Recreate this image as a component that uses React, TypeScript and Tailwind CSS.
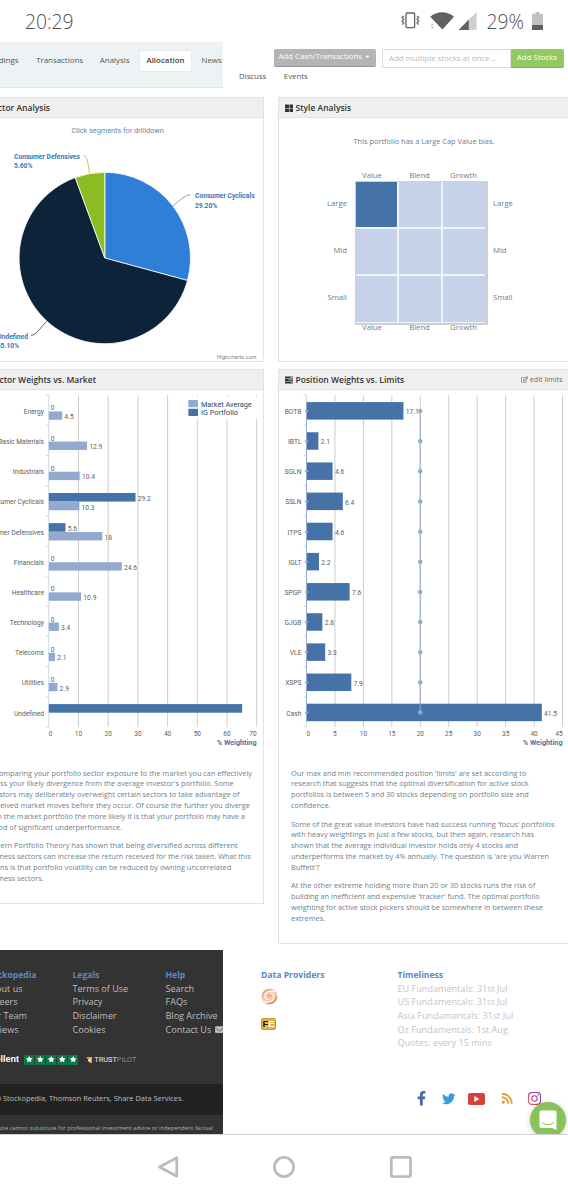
import React from "react";
import {
  FaCaretDown,
  FaEnvelope,
  FaFacebookF,
  FaInstagram,
  FaRegEdit,
  FaRss,
  FaStar,
  FaThLarge,
  FaTwitter,
} from "react-icons/fa";

const CHART_TOP = 395.2;
const BAND = 30.16;

const sectors: { name: string; portfolio: number; market: number | null }[] = [
  { name: "Energy", portfolio: 0, market: 4.5 },
  { name: "Basic Materials", portfolio: 0, market: 12.9 },
  { name: "Industrials", portfolio: 0, market: 10.4 },
  { name: "Consumer Cyclicals", portfolio: 29.2, market: 10.3 },
  { name: "Consumer Defensives", portfolio: 5.6, market: 18 },
  { name: "Financials", portfolio: 0, market: 24.6 },
  { name: "Healthcare", portfolio: 0, market: 10.9 },
  { name: "Technology", portfolio: 0, market: 3.4 },
  { name: "Telecoms", portfolio: 0, market: 2.1 },
  { name: "Utilities", portfolio: 0, market: 2.9 },
  { name: "Undefined", portfolio: 65.1, market: null },
];

const positions: [string, number][] = [
  ["BOTB", 17.1],
  ["IBTL", 2.1],
  ["SGLN", 4.6],
  ["SSLN", 6.4],
  ["ITPS", 4.6],
  ["IGLT", 2.2],
  ["SPGP", 7.6],
  ["GJGB", 2.8],
  ["VLE", 3.3],
  ["XSPS", 7.9],
  ["Cash", 41.5],
];

function StatusBar() {
  return (
    <div className="flex h-[42px] shrink-0 items-center justify-between pl-[25px] pr-[25.5px] font-['Open_Sans',sans-serif] text-[19.3px] font-light text-[#505050]">
      <span className="mt-[2px]">20:29</span>
      <div className="flex items-center">
        <svg className="h-[17px] w-[19px]" viewBox="0 0 19 17" fill="none" stroke="#616161">
          <rect x="5" y="1" width="8.6" height="14.6" rx="1" strokeWidth="1.3" />
          <path d="M2.8 4 1 5.6l1.8 1.7L1 9l1.8 1.7L1.4 12.6M16 4l1.8 1.6L16 7.3 17.8 9 16 10.7l1.4 1.9" strokeWidth="1.2" />
        </svg>
        <svg className="ml-[9.5px] h-[19px] w-[26px]" viewBox="0 0 26 19">
          <path d="M1.2 5.8C7.6-.3 18.7-.3 25 5.8L13.4 18.4Z" fill="#616161" />
          <path d="M1.5 14.2l1.8-2 1.8 2zM1.5 15.8l1.8 2 1.8-2z" fill="#c4c4c4" />
        </svg>
        <svg className="ml-[2.5px] h-[18px] w-[19px]" viewBox="0 0 19 18">
          <path d="M18.6 0v18H.6z" fill="#cfcfcf" />
          <path d="M10.8 7.6V18H.6z" fill="#616161" />
        </svg>
        <span className="ml-[10px] mt-[2px] text-[19.2px]">29%</span>
        <svg className="ml-[7.5px] h-[18px] w-[11px]" viewBox="0 0 11 18">
          <path d="M3.5 0h4v1.8H11V17q0 1-1 1H1q-1 0-1-1V1.8h3.5z" fill="#c1c1c1" />
          <path d="M0 13h11v4q0 1-1 1H1q-1 0-1-1z" fill="#616161" />
        </svg>
      </div>
    </div>
  );
}

function TopNav() {
  return (
    <div className="flex h-[55px] shrink-0 whitespace-nowrap text-[7.9px] text-[#555]">
      <nav className="flex h-[45.5px] w-[223px] items-start overflow-hidden border-b border-[#dfe3e4] bg-[#edf3f4] pt-[7.5px]">
        <span className="flex h-[22.5px] w-[18.5px] shrink-0 items-center justify-end">Holdings</span>
        <span className="flex h-[22.5px] w-[64.5px] shrink-0 items-center justify-end">Transactions</span>
        <span className="flex h-[22.5px] w-[46.5px] shrink-0 items-center justify-end">Analysis</span>
        <span className="ml-[9.5px] flex h-[22.5px] w-[53px] shrink-0 items-center justify-center border border-[#e6ebec] bg-white font-semibold text-[#444]">
          Allocation
        </span>
        <span className="ml-[9.5px] flex h-[22.5px] items-center">News</span>
      </nav>
      <div className="flex flex-col">
        <div className="flex pl-[51px] pt-[7px]">
          <button className="flex h-[17.5px] w-[101.5px] items-center justify-center gap-[2px] rounded-[2px] border-b-[1.5px] border-[#979797] bg-[#b4b4b4] pb-[1.5px] text-[7.8px] text-white">
            Add Cash/Transactions <FaCaretDown className="size-[7px]" />
          </button>
          <div className="ml-[6px] flex h-[18.5px] w-[129px] items-center border border-[#dedede] pl-[6.5px] pt-[1px] text-[7.85px] text-[#b9b9b9]">
            Add multiple stocks at once...
          </div>
          <button className="flex h-[18.5px] w-[53px] items-center justify-center rounded-r-[2px] border-b border-[#7db350] bg-[#92ca5f] text-[7.9px] text-white">
            Add Stocks
          </button>
        </div>
        <div className="flex gap-[17.5px] pl-[16px] pt-[3px] text-[7.8px] leading-[11px]">
          <span>Discuss</span>
          <span>Events</span>
        </div>
      </div>
    </div>
  );
}

function TasksIcon() {
  return (
    <svg className="h-[8px] w-[8.5px]" viewBox="0 0 9 8">
      <path d="M0 .3h9v2H0zM0 3h9v2H0zM0 5.7h9v2H0z" fill="#333" />
      <path d="M5.6.9h2.8v.7H5.6zM3.3 3.6h5.1v.7H3.3zM6.3 6.3h2.1V7H6.3z" fill="#d5d5d5" />
    </svg>
  );
}

function PanelTitle({ children }: { children: React.ReactNode }) {
  return (
    <div className="flex h-[20px] shrink-0 items-center whitespace-nowrap border-b border-[#e2e2e2] bg-[#efefef] pt-[1px] text-[8.5px] font-semibold text-[#333]">
      {children}
    </div>
  );
}

function PieChart() {
  const cx = 104.8;
  const cy = 258;
  const r = 85.7;
  const at = (pct: number) => {
    const a = (pct / 99.9) * 2 * Math.PI;
    return `${(cx + r * Math.sin(a)).toFixed(2)} ${(cy - r * Math.cos(a)).toFixed(2)}`;
  };
  const slice = (from: number, to: number) =>
    `M${cx} ${cy}L${at(from)}A${r} ${r} 0 ${to - from > 50 ? 1 : 0} 1 ${at(to)}Z`;
  return (
    <svg className="block h-[243px] w-[263px] font-['Roboto',sans-serif]" viewBox="0 118 263 243">
      <text x="71.4" y="133" fontSize="7.3" fill="#6d869f">Click segments for drilldown</text>
      <g stroke="#fff" strokeWidth="0.8" strokeLinejoin="round">
        <path d={slice(0, 29.2)} fill="#2f7ed8" />
        <path d={slice(29.2, 94.3)} fill="#0d233a" />
        <path d={slice(94.3, 99.9)} fill="#8bbc21" />
      </g>
      <g fill="none" strokeWidth="0.7">
        <path d="M83.5 155.3c4 0 4.5 9 6 18" stroke="#8bbc21" />
        <path d="M190.5 194.7c-5 0-10 5-17.5 11.3" stroke="#4f7fb5" />
        <path d="M31 335.3c5 0 8-6 15.500-13.8" stroke="#0d233a" />
      </g>
      <g fontSize="6.7" fontWeight="700" fill="#3a76bd">
        <text x="14" y="158.7">Consumer Defensives</text>
        <text x="14" y="167.6">5.60%</text>
        <text x="195" y="198.4">Consumer Cyclicals</text>
        <text x="195" y="207.6">29.20%</text>
        <text x="28" y="338.8">
          <tspan textAnchor="end">Undefined</tspan>
        </text>
        <text x="19" y="347.6" textAnchor="end">65.10%</text>
      </g>
      <text x="256.5" y="359" fontSize="5.6" fill="#808080" textAnchor="end">Highcharts.com</text>
    </svg>
  );
}

function SectorChart() {
  const x0 = 48.8;
  const unit = 2.97;
  const bottom = CHART_TOP + 11 * BAND;
  return (
    <svg className="block h-[370px] w-[263px] font-['Roboto',sans-serif]" viewBox="0 390 263 370">
      {[10, 20, 30, 40, 50, 60, 70].map((v) => (
        <line key={v} x1={x0 + v * unit} x2={x0 + v * unit} y1={CHART_TOP} y2={bottom} stroke="#c0c0c0" strokeWidth="0.8" />
      ))}
      <rect x="184" y="396.5" width="74" height="22.5" fill="#fff" />
      <rect x="188.3" y="400" width="9.7" height="7.2" rx="0.7" fill="#93a9d0" />
      <rect x="188.3" y="408.7" width="9.7" height="7.2" rx="0.7" fill="#4572a7" />
      <g fontSize="7.3" fill="#274b6d">
        <text x="201" y="406.9">Market Average</text>
        <text x="201" y="415.3">IG Portfolio</text>
      </g>
      <path
        d={`M${x0} ${CHART_TOP}V${bottom}` + Array.from({ length: 12 }, (_, i) => `M${x0} ${CHART_TOP + i * BAND}h-3`).join("")}
        stroke="#c0d0e0"
        strokeWidth="0.8"
        fill="none"
      />
      {sectors.map((s, i) => {
        const y = CHART_TOP + i * BAND;
        return (
          <g key={s.name} fontSize="6.7" fill="#606060">
            <text x="44" y={y + 18.7} textAnchor="end">{s.name}</text>
            {s.portfolio > 0 && <rect x={x0} y={y + 7.3} width={s.portfolio * unit} height="8.6" fill="#4572a7" />}
            {s.market !== null && (
              <>
                <rect x={x0} y={y + 16.2} width={s.market * unit} height="8.4" fill="#93a9d0" />
                <text x={x0 + s.market * unit + 2.2} y={y + 23.9}>{s.market}</text>
                <text x={s.portfolio ? x0 + s.portfolio * unit + 2.2 : 50.7} y={y + 15.2}>
                  {s.portfolio}
                </text>
              </>
            )}
          </g>
        );
      })}
      <g fontSize="6.5" fill="#606060" textAnchor="middle">
        {[0, 10, 20, 30, 40, 50, 60, 70].map((v) => (
          <text key={v} x={v === 0 ? 50.7 : v === 70 ? 253 : x0 + v * unit} y="735.5">{v}</text>
        ))}
      </g>
      <text x="256.5" y="745" fontSize="7.2" fontWeight="700" fill="#4d759e" textAnchor="end">% Weighting</text>
    </svg>
  );
}

function PositionChart() {
  const x0 = 306.5;
  const unit = 5.69;
  const bottom = CHART_TOP + 11 * BAND;
  const limit = 420.2;
  return (
    <svg className="block h-[370px] w-[289px] font-['Roboto',sans-serif]" viewBox="279 390 289 370">
      {[5, 10, 15, 20, 25, 30, 35, 40, 45].map((v) => (
        <line key={v} x1={x0 + v * unit} x2={x0 + v * unit} y1={CHART_TOP} y2={bottom} stroke="#c0c0c0" strokeWidth="0.8" />
      ))}
      <path
        d={`M${x0} ${CHART_TOP}V${bottom}` + Array.from({ length: 12 }, (_, i) => `M${x0} ${CHART_TOP + i * BAND}h-3`).join("")}
        stroke="#c0d0e0"
        strokeWidth="0.8"
        fill="none"
      />
      {positions.map(([name, v], i) => {
        const y = CHART_TOP + i * BAND;
        return (
          <g key={name} fontSize="6.7" fill="#606060">
            <text x="301.5" y={y + 18.7} textAnchor="end">{name}</text>
            <rect x={x0} y={y + 6.9} width={v * 5.67} height="17.5" fill="#4572a7" />
            <text x={x0 + v * 5.67 + 2.3} y={y + 18.9}>{v}</text>
          </g>
        );
      })}
      <g stroke="#93a9d0" fill="#93a9d0">
        <path d={`M${limit} ${CHART_TOP + 15.8}v${10 * BAND}M${x0} ${CHART_TOP + 15.8}v${10 * BAND}`} strokeWidth="1" />
        {positions.map(([name], i) => (
          <React.Fragment key={name}>
            <circle cx={limit} cy={CHART_TOP + 15.8 + i * BAND} r="2" strokeWidth="0.6" />
            <path d={`M${x0 - 2} ${CHART_TOP + 15.8 + i * BAND}l2-2 2 2-2 2z`} stroke="none" />
          </React.Fragment>
        ))}
      </g>
      <g fontSize="6.5" fill="#606060" textAnchor="middle">
        {[0, 5, 10, 15, 20, 25, 30, 35, 40, 45].map((v) => (
          <text key={v} x={v === 0 ? 308.3 : v === 45 ? 559 : x0 + v * unit} y="735.5">{v}</text>
        ))}
      </g>
      <text x="562.5" y="745" fontSize="7.2" fontWeight="700" fill="#4d759e" textAnchor="end">% Weighting</text>
    </svg>
  );
}

function StyleLabels() {
  return (
    <div className="flex h-[11px] text-[7.7px] leading-[11px]">
      <span className="w-[43px] pr-[8px] text-center">Value</span>
      <span className="w-[44px] text-center">Blend</span>
      <span className="w-[44px] text-center">Growth</span>
    </div>
  );
}

function StyleBox() {
  return (
    <div className="flex flex-col items-center text-[#6c7d8e]">
      <p className="mt-[18px] h-[34px] pl-px text-[7.4px] leading-[11px]">This portfolio has a Large Cap Value bias.</p>
      <div className="flex w-full">
        <div className="flex w-[68px] flex-col pt-[10px] text-right text-[7.7px]">
          <span className="flex h-[47.3px] items-center justify-end">Large</span>
          <span className="flex h-[47.3px] items-center justify-end">Mid</span>
          <span className="flex h-[47.3px] items-center justify-end">Small</span>
        </div>
        <div className="ml-[7.5px] flex w-[133px] flex-col">
          <StyleLabels />
          <div className="grid h-[143.5px] grid-cols-3 grid-rows-3 gap-[2px] border-y border-b-[2.5px] border-l border-r-[3px] border-[#cdd1d6] bg-[#f1f5fb] pb-[1px]">
            <div className="bg-[#4572a7]" />
            {[1, 2, 3, 4, 5, 6, 7, 8].map((n) => (
              <div key={n} className="bg-[#c5d2e9]" />
            ))}
          </div>
          <div className="-mt-[2.5px]">
            <StyleLabels />
          </div>
        </div>
        <div className="ml-[5.5px] flex flex-col pt-[10px] text-[7.7px]">
          <span className="flex h-[47.3px] items-center">Large</span>
          <span className="flex h-[47.3px] items-center">Mid</span>
          <span className="flex h-[47.3px] items-center">Small</span>
        </div>
      </div>
    </div>
  );
}

function Prose({ paragraphs, className }: { paragraphs: string[][]; className: string }) {
  return (
    <div className={`flex flex-col gap-[7.2px] whitespace-nowrap pt-[7.5px] text-[7.36px] leading-[10.95px] text-[#6d7f90] ${className}`}>
      {paragraphs.map((lines) => (
        <p key={lines[0]}>
          {lines.map((line) => (
            <span key={line} className="block">{line}</span>
          ))}
        </p>
      ))}
    </div>
  );
}

const sectorNotes = [
  [
    "By comparing your portfolio sector exposure to the market you can effectively",
    "assess your likely divergence from the average investor's portfolio. Some",
    "investors may deliberately overweight certain sectors to take advantage of",
    "perceived market moves before they occur. Of course the further you diverge",
    "from the market portfolio the more likely it is that your portfolio may have a",
    "period of significant underperformance.",
  ],
  [
    "Modern Portfolio Theory has shown that being diversified across different",
    "business sectors can increase the return received for the risk taken. What this",
    "means is that portfolio volatility can be reduced by owning uncorrelated",
    "business sectors.",
  ],
];

const positionNotes = [
  [
    "Our max and min recommended position 'limits' are set according to",
    "research that suggests that the optimal diversification for active stock",
    "portfolios is between 5 and 30 stocks depending on portfolio size and",
    "confidence.",
  ],
  [
    "Some of the great value investors have had success running 'focus' portfolios",
    "with heavy weightings in just a few stocks, but then again, research has",
    "shown that the average individual investor holds only 4 stocks and",
    "underperforms the market by 4% annually. The question is 'are you Warren",
    "Buffett'?",
  ],
  [
    "At the other extreme holding more than 20 or 30 stocks runs the risk of",
    "building an inefficient and expensive 'tracker' fund. The optimal portfolio",
    "weighting for active stock pickers should be somewhere in between these",
    "extremes.",
  ],
];

function Panels() {
  return (
    <main className="flex h-[853px] shrink-0 gap-[14px]">
      <div className="flex w-[264px] shrink-0 flex-col gap-[7px] overflow-hidden">
        <section className="h-[265px] border-y border-r border-[#e2e2e2]">
          <PanelTitle>
            <span className="flex w-[50px] justify-end">Sector Analysis</span>
          </PanelTitle>
          <PieChart />
        </section>
        <section className="h-[535px] border-y border-r border-[#e2e2e2]">
          <PanelTitle>
            <span className="flex w-[96px] justify-end">Sector Weights vs. Market</span>
          </PanelTitle>
          <SectorChart />
          <Prose paragraphs={sectorNotes} className="-ml-[15px]" />
        </section>
      </div>
      <div className="flex w-[290px] shrink-0 flex-col gap-[7px]">
        <section className="h-[265px] border-y border-l border-[#e2e2e2]">
          <PanelTitle>
            <FaThLarge className="ml-[5.5px] mr-[2.5px] size-[8.5px]" />
            Style Analysis
          </PanelTitle>
          <StyleBox />
        </section>
        <section className="h-[575px] border-y border-l border-[#e2e2e2]">
          <PanelTitle>
            <span className="ml-[5.5px] mr-[2.5px]"><TasksIcon /></span>
            Position Weights vs. Limits
            <span className="ml-auto mr-[5.5px] flex items-center gap-[2px] pb-[1px] text-[7.2px] font-normal text-[#6c6c6c]">
              <FaRegEdit className="size-[7px]" />
              edit limits
            </span>
          </PanelTitle>
          <PositionChart />
          <Prose paragraphs={positionNotes} className="pl-[12px]" />
        </section>
      </div>
    </main>
  );
}

function Links({ title, items }: { title: string; items: string[] }) {
  return (
    <>
      <h4 className="text-[8.6px] font-bold leading-[13px] text-[#5b87c7]">{title}</h4>
      {items.map((t) => (
        <div key={t} className="leading-[13.7px]">{t}</div>
      ))}
    </>
  );
}

function Footer() {
  return (
    <footer className="relative flex h-[183.5px] shrink-0 overflow-hidden whitespace-nowrap text-[9.05px] text-[#bdbdbd]">
      <div className="flex w-[223px] shrink-0 flex-col overflow-hidden bg-[#333]">
        <div className="flex h-[93px] pt-[18.5px]">
          <div className="flex w-[72.5px] shrink-0 flex-col">
            <h4 className="flex w-[36.5px] justify-end text-[8.6px] font-bold leading-[13px] text-[#5b87c7]">Stockopedia</h4>
            <div className="flex w-[22.5px] justify-end leading-[13.7px]">About us</div>
            <div className="flex w-[17.5px] justify-end leading-[13.7px]">Careers</div>
            <div className="flex w-[27px] justify-end leading-[13.7px]">Our Team</div>
            <div className="flex w-[18.5px] justify-end leading-[13.7px]">Reviews</div>
          </div>
          <div className="w-[93px] shrink-0">
            <Links title="Legals" items={["Terms of Use", "Privacy", "Disclaimer", "Cookies"]} />
          </div>
          <div className="flex shrink-0 items-end">
            <div className="w-[49px] shrink-0 self-start">
              <Links title="Help" items={["Search", "FAQs", "Blog Archive", "Contact Us"]} />
            </div>
            <FaEnvelope className="mb-[8.5px] size-[9px] shrink-0" />
          </div>
        </div>
        <div className="flex h-[41px] items-start pt-[12px]">
          <span className="flex h-[10px] w-[19px] shrink-0 items-center justify-end font-['Liberation_Sans',sans-serif] text-[9px] font-bold text-white">Excellent</span>
          <div className="ml-[5.3px] flex gap-[1px]">
            {[1, 2, 3, 4, 5].map((n) => (
              <span key={n} className="flex size-[10px] items-center justify-center bg-[#0a7a4b]">
                <FaStar className="size-[6.5px] text-white" />
              </span>
            ))}
          </div>
          <svg className="ml-[8px] mt-[2px] size-[7px]" viewBox="0 0 7 7">
            <path d="M0 0h6.5L3 3.500zM2.500 5 6 2.300V6.600z" fill="#f39b2d" />
            <path d="M2 3.2 6.8.6 3.2 5.2z" fill="#fff" />
          </svg>
          <span className="ml-[1px] flex h-[10px] items-center font-['Roboto',sans-serif] text-[7.4px] text-[#ececec]">
            TRUST<span className="font-light text-[#ababab]">PILOT</span>
          </span>
        </div>
        <div className="flex h-[31px] shrink-0 items-center bg-[#222]">
          <span className="flex w-[183.5px] justify-end text-[7.4px]">© 2020 Stockopedia, Thomson Reuters, Share Data Services.</span>
        </div>
        <div className="flex h-[19px] shrink-0 items-center pt-[8px]">
          <span className="flex w-[213px] justify-end text-[5.75px] text-[#b2b2b2]">
            The content of this site cannot substitute for professional investment advice or independent factual
          </span>
        </div>
      </div>
      <div className="flex flex-1 flex-col pl-[38px] pt-[18.5px]">
        <div className="flex">
          <div className="w-[136.5px]">
            <h4 className="text-[8.6px] font-bold leading-[13px] text-[#5b87c7]">Data Providers</h4>
            <svg className="mt-[6.5px] size-[17px]" viewBox="0 0 17 17" fill="none">
              <circle cx="8.5" cy="8.5" r="8" fill="#f3c6ae" />
              <g strokeLinecap="round">
                <path d="M1.6 8C2 3.5 6 .8 10.5 1.8" stroke="#e5a585" strokeWidth="1.3" />
                <path d="M15.4 9C15 13.5 11 16.2 6.5 15.2" stroke="#dc8f68" strokeWidth="1.6" />
                <path d="M13.5 3.5C9 1.8 4.5 4 4.2 8c-.2 2.5 1.6 3.7 3.3 3.5" stroke="#fdf3ed" strokeWidth="1.5" />
                <path d="M3.5 13.5c4.5 1.7 9-.5 9.3-4.5.2-2.5-1.6-3.7-3.3-3.5" stroke="#fdf3ed" strokeWidth="1.5" />
                <path d="M6.8 9.5c-.5-3 3.5-3.5 3.7-.8" stroke="#e7aa8a" strokeWidth="1.2" />
              </g>
            </svg>
            <span className="mt-[12.5px] flex h-[12.5px] w-[15px] items-center justify-center rounded-[2px] border border-[#c99a35] bg-[#e9b340] font-['Liberation_Sans',sans-serif] text-[9.5px] font-bold leading-none text-white">
              <span className="text-[#1d1a14]">F</span>E
            </span>
          </div>
          <div className="text-[9.1px] text-[#c4c4c4]">
            <Links
              title="Timeliness"
              items={["EU Fundamentals: 31st Jul", "US Fundamentals: 31st Jul", "Asia Fundamentals: 31st Jul", "Oz Fundamentals: 1st Aug", "Quotes: every 15 mins"]}
            />
          </div>
        </div>
        <div className="mt-[40px] flex h-[17px] items-center pl-[153px]">
          <FaFacebookF className="h-[14.5px] w-[15px] text-[#4968a8]" />
          <FaTwitter className="ml-[13px] size-[13.5px] text-[#3a9fd8]" />
          <svg className="ml-[12px] mt-[1px] h-[12px] w-[17px]" viewBox="0 0 17 12">
            <rect width="17" height="12" rx="2" fill="#d9403a" />
            <path d="M6.300 3v6l5-3z" fill="#fff" />
          </svg>
          <FaRss className="-mt-[1px] ml-[16px] size-[12.5px] text-[#dba33f]" />
          <svg className="size-0">
            <defs>
              <linearGradient id="insta" x1="1" y1="0" x2="0" y2="1">
                <stop offset="0" stopColor="#6d4bb0" />
                <stop offset="0.5" stopColor="#b93a86" />
                <stop offset="1" stopColor="#e87a4a" />
              </linearGradient>
            </defs>
          </svg>
          <FaInstagram className="-mt-[1px] ml-[14px] size-[15px]" fill="url(#insta)" />
        </div>
      </div>
      <div className="absolute left-[529.5px] top-[151.5px] flex size-[36.5px] items-center justify-center rounded-full bg-[#8bc15a] shadow-[0_1px_6px_rgba(0,0,0,0.2)]">
        <svg className="h-[20px] w-[18px]" viewBox="0 0 18 20">
          <path d="M2 .5h14q1.5 0 1.5 1.5v18l-4.5-2H2Q.5 18 .5 16.5V2Q.5.5 2 .5z" fill="#fff" />
          <path d="M3.5 12.8q5.500 4.200 11 0" stroke="#8bc15a" strokeWidth="1" fill="none" strokeLinecap="round" />
        </svg>
      </div>
    </footer>
  );
}

function SystemNav() {
  return (
    <div className="flex h-[66.5px] shrink-0 items-center justify-center border-t border-[#d2d2d6] bg-white">
      <svg className="h-[24px] w-[260px]" viewBox="154 1155 260 24" fill="none" stroke="#bcbcbc" strokeWidth="2.8" strokeLinejoin="round">
        <path d="M176.8 1157.8v18.4L159.5 1167z" />
        <circle cx="284" cy="1167" r="9.6" />
        <rect x="391.3" y="1157.4" width="19.2" height="19.2" rx="1.5" />
      </svg>
    </div>
  );
}

export default function App() {
  return (
    <div className="flex h-[1200px] w-[568px] flex-col overflow-hidden bg-white font-['Open_Sans',sans-serif]">
      <StatusBar />
      <TopNav />
      <Panels />
      <Footer />
      <SystemNav />
    </div>
  );
}
